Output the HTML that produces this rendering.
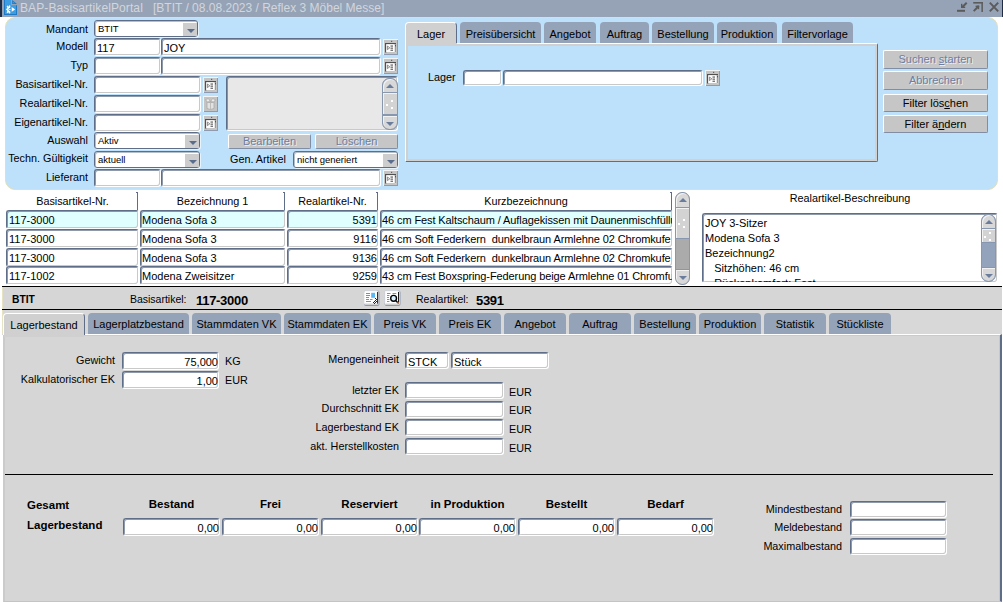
<!DOCTYPE html><html><head><meta charset="utf-8"><style>
*{margin:0;padding:0;box-sizing:border-box}
html,body{width:1003px;height:602px;overflow:hidden;background:#fff;font-family:"Liberation Sans",sans-serif;font-size:11px;color:#000}
.t{position:absolute;white-space:nowrap;line-height:13px;font-size:10.8px}
.in{position:absolute;border-top:1px solid #5e6e89;border-left:1px solid #5e6e89;border-right:1px solid #fff;border-bottom:1px solid #fff;border-radius:3px;box-shadow:inset 1px 1px 0 rgba(94,110,137,0.7), inset -1px -1px 0 #c9c9c9;overflow:hidden}
.cb{position:absolute;background:#fff;border:1px solid #5e6e89;border-radius:3px;box-shadow:inset 1px 1px 0 rgba(94,110,137,0.45), 1px 1px 0 rgba(255,255,255,0.6)}
.dd{position:absolute;right:0;top:2px;width:14px;background:#cdcdcd}
.tri{position:absolute;left:3.5px;top:5.5px;width:0;height:0;border-left:4px solid transparent;border-right:4px solid transparent;border-top:4px solid #5a6d8c}
.tru{position:absolute;width:0;height:0;border-left:4px solid transparent;border-right:4px solid transparent;border-bottom:4px solid #6a7d9c}
.trd{position:absolute;width:0;height:0;border-left:4px solid transparent;border-right:4px solid transparent;border-top:4px solid #6a7d9c}
.ib{position:absolute;background:#c3c3c3;border-radius:2px;box-shadow:inset -1px -1px 0 #a9a9a9, inset 1px 1px 0 #d8d8d8}
.bt{position:absolute;background:#c6c6c6;border-top:1px solid #fff;border-left:1px solid #fff;border-right:1px solid #7f8da5;border-bottom:1px solid #7f8da5;border-radius:2px;text-align:center;white-space:nowrap}
.bt.dis{color:#6b7ea3;text-shadow:1px 1px 0 #eeeeee}
.tb{position:absolute;background:#95a3b8;border-radius:4px 4px 0 0;text-align:center;white-space:nowrap}
.tb.act{background:#d0d0d0;border-top:1px solid #fff;border-left:1px solid #fff;border-right:1px solid #5e6e89}
.sb{position:absolute;border:1px solid #8797b0;overflow:hidden}
.sbb{position:absolute;left:0;background:#d8d8d8;box-shadow:inset 1px 1px 0 #f2f2f2}
.dot{position:absolute;width:2px;height:2px;background:#fff}
</style></head><body><div style="position:absolute;left:0px;top:0px;width:1003px;height:17px;background:#96a3b7"></div>
<div style="position:absolute;left:0px;top:0px;width:2px;height:17px;background:#1f2c45"></div>
<div style="position:absolute;left:1002px;top:0px;width:1px;height:17px;background:#1f2c45"></div>
<svg style="position:absolute;left:4px;top:0" width="14" height="16" viewBox="0 0 14 16">
<rect x="0" y="0" width="13" height="15" fill="#1f78c4"/>
<rect x="1" y="0" width="11" height="14" fill="#3d9de2"/>
<rect x="7" y="0" width="1.2" height="5" fill="#96a3b7"/>
<rect x="7" y="4" width="6" height="1.2" fill="#96a3b7"/>
<rect x="8.2" y="0" width="4.8" height="4" fill="#96a3b7"/>
<path d="M8.2 0 L13 4 H8.2 Z" fill="#1f78c4"/>
<path d="M9 1.6 L11 3.3 H9 Z" fill="#3d9de2"/>
<g fill="#fff">

<rect x="4.9" y="5.4" width="1.3" height="1.6"/>
<rect x="4.9" y="11.8" width="1.3" height="1.6"/>
<rect x="2.2" y="8.7" width="1.4" height="1.4"/>
<path d="M2.6 6.2 L3.8 5.6 L4.6 7 L3.4 7.8 Z"/>
<path d="M2.6 12.6 L3.8 13.2 L4.6 11.8 L3.4 11 Z"/>
<path d="M7.7 7.1 L11.2 9.4 L7.7 11.7 Z"/>
</g>
<path d="M6.2 6.9 A2.5 2.5 0 0 0 6.2 11.9" fill="none" stroke="#fff" stroke-width="1.5"/><circle cx="5.9" cy="9.4" r="0.75" fill="#fff"/>
</svg>
<div class="t" style="left:20px;top:2px;font-size:12px;color:#d3d6dc;line-height:12px;letter-spacing:0.1px">BAP-BasisartikelPortal</div>
<div class="t" style="left:153px;top:2px;font-size:12px;color:#d3d6dc;line-height:12px">[BTIT / 08.08.2023 / Reflex 3 Möbel Messe]</div>
<svg style="position:absolute;left:950px;top:0" width="52" height="16" viewBox="950 0 52 16">
<g fill="#5b5b5b">
<rect x="957" y="9.8" width="8" height="2"/>
<path d="M966 2 L967.4 3.4 L962.6 8.2 L961.2 6.8 Z"/>
<rect x="961" y="3.8" width="1.4" height="4.2"/>
<rect x="961" y="6.6" width="4.2" height="1.4"/>
<rect x="973.2" y="2" width="9.7" height="1.6"/>
<rect x="981.4" y="2" width="1.5" height="10"/>
<path d="M973 10.4 L974.4 11.8 L979.2 7 L977.8 5.6 Z"/>
<rect x="975.6" y="5.6" width="3.6" height="1.4"/>
<rect x="977.8" y="5.6" width="1.4" height="3.6"/>
</g>
<g stroke="#5b5b5b" stroke-width="2" fill="none">
<path d="M989.8 2.6 L998.2 11.4 M998.2 2.6 L989.8 11.4"/>
</g></svg>
<div style="position:absolute;left:5px;top:17px;width:993px;height:173px;background:#bde0fb;border:1px solid #e3dfb6;border-radius:10px"></div>
<div class="t" style="right:915px;top:23px;">Mandant</div>
<div class="t" style="right:915px;top:40px;">Modell</div>
<div class="t" style="right:915px;top:59px;">Typ</div>
<div class="t" style="right:915px;top:78px;">Basisartikel-Nr.</div>
<div class="t" style="right:915px;top:97px;">Realartikel-Nr.</div>
<div class="t" style="right:915px;top:116px;">Eigenartikel-Nr.</div>
<div class="t" style="right:915px;top:134px;">Auswahl</div>
<div class="t" style="right:915px;top:152px;">Techn. Gültigkeit</div>
<div class="t" style="right:915px;top:171px;">Lieferant</div>
<div class="cb" style="left:94px;top:20px;width:104px;height:17px"><span style="position:absolute;left:3px;top:1px;font-size:9.5px;line-height:13px">BTIT</span><div class="dd" style="height:13px"><div class="tri"></div></div></div>
<div class="in" style="left:94px;top:38px;width:67px;height:18px;background:#fff;"><span style="position:absolute;left:2px;top:3px;font-size:11px;line-height:13px;white-space:nowrap;">117</span></div>
<div class="in" style="left:161px;top:38px;width:220px;height:18px;background:#fff;"><span style="position:absolute;left:2px;top:3px;font-size:11px;line-height:13px;white-space:nowrap;">JOY</span></div>
<div style="position:absolute;left:383px;top:39px;width:15px;height:16px"><svg width="15" height="16" viewBox="0 0 15 16" style="position:absolute;left:0;top:0">
<rect x="0" y="0" width="15" height="16" fill="#c4c4c4"/>
<rect x="0" y="0" width="15" height="1" fill="#f4f4f4"/><rect x="0" y="0" width="1" height="16" fill="#f4f4f4"/>
<rect x="14" y="1" width="1" height="15" fill="#8d9ab0"/><rect x="1" y="15" width="14" height="1" fill="#8d9ab0"/>
<rect x="8" y="1.8" width="1.2" height="1.2" fill="#666"/>
<rect x="2" y="4" width="11" height="1.3" fill="#505050"/>
<rect x="2" y="4" width="1.3" height="9.5" fill="#505050"/>
<rect x="3.2" y="5.2" width="8.3" height="7.8" fill="#fdfdfd"/>
<rect x="11.8" y="5.2" width="1" height="8" fill="#f4f4f4"/>
<rect x="12" y="5.5" width="1" height="2.2" fill="#555"/><rect x="12" y="8" width="1" height="5" fill="#9a9a9a"/>
<path d="M4.4 7 L6.8 8.8 L4.4 10.6 Z" fill="none" stroke="#707070" stroke-width="0.8"/>
<rect x="7.5" y="6.5" width="2.5" height="1.1" fill="#555"/><rect x="7.5" y="8.6" width="2.5" height="1.1" fill="#555"/><rect x="7.5" y="10.7" width="2.5" height="1.1" fill="#555"/>
</svg></div>
<div class="in" style="left:94px;top:57px;width:67px;height:18px;background:#fff;"></div>
<div class="in" style="left:161px;top:57px;width:220px;height:18px;background:#fff;"></div>
<div style="position:absolute;left:383px;top:58px;width:15px;height:16px"><svg width="15" height="16" viewBox="0 0 15 16" style="position:absolute;left:0;top:0">
<rect x="0" y="0" width="15" height="16" fill="#c4c4c4"/>
<rect x="0" y="0" width="15" height="1" fill="#f4f4f4"/><rect x="0" y="0" width="1" height="16" fill="#f4f4f4"/>
<rect x="14" y="1" width="1" height="15" fill="#8d9ab0"/><rect x="1" y="15" width="14" height="1" fill="#8d9ab0"/>
<rect x="8" y="1.8" width="1.2" height="1.2" fill="#666"/>
<rect x="2" y="4" width="11" height="1.3" fill="#505050"/>
<rect x="2" y="4" width="1.3" height="9.5" fill="#505050"/>
<rect x="3.2" y="5.2" width="8.3" height="7.8" fill="#fdfdfd"/>
<rect x="11.8" y="5.2" width="1" height="8" fill="#f4f4f4"/>
<rect x="12" y="5.5" width="1" height="2.2" fill="#555"/><rect x="12" y="8" width="1" height="5" fill="#9a9a9a"/>
<path d="M4.4 7 L6.8 8.8 L4.4 10.6 Z" fill="none" stroke="#707070" stroke-width="0.8"/>
<rect x="7.5" y="6.5" width="2.5" height="1.1" fill="#555"/><rect x="7.5" y="8.6" width="2.5" height="1.1" fill="#555"/><rect x="7.5" y="10.7" width="2.5" height="1.1" fill="#555"/>
</svg></div>
<div class="in" style="left:94px;top:76px;width:107px;height:18px;background:#fff;"></div>
<div style="position:absolute;left:203px;top:77px;width:15px;height:16px"><svg width="15" height="16" viewBox="0 0 15 16" style="position:absolute;left:0;top:0">
<rect x="0" y="0" width="15" height="16" fill="#c4c4c4"/>
<rect x="0" y="0" width="15" height="1" fill="#f4f4f4"/><rect x="0" y="0" width="1" height="16" fill="#f4f4f4"/>
<rect x="14" y="1" width="1" height="15" fill="#8d9ab0"/><rect x="1" y="15" width="14" height="1" fill="#8d9ab0"/>
<rect x="8" y="1.8" width="1.2" height="1.2" fill="#666"/>
<rect x="2" y="4" width="11" height="1.3" fill="#505050"/>
<rect x="2" y="4" width="1.3" height="9.5" fill="#505050"/>
<rect x="3.2" y="5.2" width="8.3" height="7.8" fill="#fdfdfd"/>
<rect x="11.8" y="5.2" width="1" height="8" fill="#f4f4f4"/>
<rect x="12" y="5.5" width="1" height="2.2" fill="#555"/><rect x="12" y="8" width="1" height="5" fill="#9a9a9a"/>
<path d="M4.4 7 L6.8 8.8 L4.4 10.6 Z" fill="none" stroke="#707070" stroke-width="0.8"/>
<rect x="7.5" y="6.5" width="2.5" height="1.1" fill="#555"/><rect x="7.5" y="8.6" width="2.5" height="1.1" fill="#555"/><rect x="7.5" y="10.7" width="2.5" height="1.1" fill="#555"/>
</svg></div>
<div class="in" style="left:94px;top:95px;width:107px;height:18px;background:#fff;"></div>
<div style="position:absolute;left:203px;top:96px;width:15px;height:16px"><svg width="15" height="16" viewBox="0 0 15 16" style="position:absolute;left:0;top:0">
<rect x="0" y="0" width="15" height="16" fill="#c4c4c4"/>
<rect x="0" y="0" width="15" height="1" fill="#f4f4f4"/><rect x="0" y="0" width="1" height="16" fill="#f4f4f4"/>
<rect x="14" y="1" width="1" height="15" fill="#8d9ab0"/><rect x="1" y="15" width="14" height="1" fill="#8d9ab0"/>
<path d="M4 6 L4 12.5 Q7.5 14.5 11 12.5 L11 6 Q7.5 7.5 4 6 Z" fill="#e2e2e2" stroke="#a9a9a9" stroke-width="0.8"/>
<path d="M4 6 L2.6 3.6 L5.4 2.6 L7.5 5.6 Z" fill="#ececec" stroke="#a9a9a9" stroke-width="0.8"/>
<path d="M11 6 L12.4 3.6 L9.6 2.6 L7.5 5.6 Z" fill="#ececec" stroke="#a9a9a9" stroke-width="0.8"/>
<path d="M7.5 7 V13.5" stroke="#b5b5b5" stroke-width="0.8"/>
</svg></div>
<div class="in" style="left:94px;top:114px;width:107px;height:18px;background:#fff;"></div>
<div style="position:absolute;left:203px;top:115px;width:15px;height:16px"><svg width="15" height="16" viewBox="0 0 15 16" style="position:absolute;left:0;top:0">
<rect x="0" y="0" width="15" height="16" fill="#c4c4c4"/>
<rect x="0" y="0" width="15" height="1" fill="#f4f4f4"/><rect x="0" y="0" width="1" height="16" fill="#f4f4f4"/>
<rect x="14" y="1" width="1" height="15" fill="#8d9ab0"/><rect x="1" y="15" width="14" height="1" fill="#8d9ab0"/>
<rect x="8" y="1.8" width="1.2" height="1.2" fill="#666"/>
<rect x="2" y="4" width="11" height="1.3" fill="#505050"/>
<rect x="2" y="4" width="1.3" height="9.5" fill="#505050"/>
<rect x="3.2" y="5.2" width="8.3" height="7.8" fill="#fdfdfd"/>
<rect x="11.8" y="5.2" width="1" height="8" fill="#f4f4f4"/>
<rect x="12" y="5.5" width="1" height="2.2" fill="#555"/><rect x="12" y="8" width="1" height="5" fill="#9a9a9a"/>
<path d="M4.4 7 L6.8 8.8 L4.4 10.6 Z" fill="none" stroke="#707070" stroke-width="0.8"/>
<rect x="7.5" y="6.5" width="2.5" height="1.1" fill="#555"/><rect x="7.5" y="8.6" width="2.5" height="1.1" fill="#555"/><rect x="7.5" y="10.7" width="2.5" height="1.1" fill="#555"/>
</svg></div>
<div class="cb" style="left:94px;top:132px;width:106px;height:17px"><span style="position:absolute;left:3px;top:1px;font-size:9.5px;line-height:13px">Aktiv</span><div class="dd" style="height:13px"><div class="tri"></div></div></div>
<div class="cb" style="left:94px;top:151px;width:106px;height:17px"><span style="position:absolute;left:3px;top:1px;font-size:9.5px;line-height:13px">aktuell</span><div class="dd" style="height:13px"><div class="tri"></div></div></div>
<div class="in" style="left:94px;top:169px;width:67px;height:18px;background:#fff;"></div>
<div class="in" style="left:161px;top:169px;width:220px;height:18px;background:#fff;"></div>
<div style="position:absolute;left:383px;top:170px;width:15px;height:16px"><svg width="15" height="16" viewBox="0 0 15 16" style="position:absolute;left:0;top:0">
<rect x="0" y="0" width="15" height="16" fill="#c4c4c4"/>
<rect x="0" y="0" width="15" height="1" fill="#f4f4f4"/><rect x="0" y="0" width="1" height="16" fill="#f4f4f4"/>
<rect x="14" y="1" width="1" height="15" fill="#8d9ab0"/><rect x="1" y="15" width="14" height="1" fill="#8d9ab0"/>
<rect x="8" y="1.8" width="1.2" height="1.2" fill="#666"/>
<rect x="2" y="4" width="11" height="1.3" fill="#505050"/>
<rect x="2" y="4" width="1.3" height="9.5" fill="#505050"/>
<rect x="3.2" y="5.2" width="8.3" height="7.8" fill="#fdfdfd"/>
<rect x="11.8" y="5.2" width="1" height="8" fill="#f4f4f4"/>
<rect x="12" y="5.5" width="1" height="2.2" fill="#555"/><rect x="12" y="8" width="1" height="5" fill="#9a9a9a"/>
<path d="M4.4 7 L6.8 8.8 L4.4 10.6 Z" fill="none" stroke="#707070" stroke-width="0.8"/>
<rect x="7.5" y="6.5" width="2.5" height="1.1" fill="#555"/><rect x="7.5" y="8.6" width="2.5" height="1.1" fill="#555"/><rect x="7.5" y="10.7" width="2.5" height="1.1" fill="#555"/>
</svg></div>
<div class="in" style="left:226px;top:76px;width:172px;height:55px;background:#e8e8e8;"></div>
<div class="sb" style="left:382px;top:78px;width:16px;height:52px;border-radius:7px;background:#ababab"><div class="sbb" style="top:0;width:14px;height:14px;border-radius:7px 7px 0 0;border-bottom:1px solid #8797b0"><div class="tru" style="left:3.0px;top:4.5px"></div></div><div class="sbb" style="top:36px;width:14px;height:14px;border-radius:0 0 7px 7px;border-top:1px solid #8797b0"><div class="trd" style="left:3.0px;top:5.5px"></div></div><div class="sbb" style="top:14px;width:14px;height:22px;background:#d3d3d3;border-bottom:1px solid #8797b0"><div class="dot" style="left:8px;top:7px"></div><div class="dot" style="left:3px;top:11px"></div><div class="dot" style="left:8px;top:14px"></div></div></div>
<div class="bt dis" style="left:228px;top:134px;width:83px;height:15px;line-height:13px;font-size:11px">Bearbeiten</div>
<div class="bt dis" style="left:315px;top:134px;width:83px;height:15px;line-height:13px;font-size:11px">Löschen</div>
<div class="t" style="left:230px;top:153px;">Gen. Artikel</div>
<div class="cb" style="left:293px;top:151px;width:105px;height:17px"><span style="position:absolute;left:3px;top:1px;font-size:9.5px;line-height:13px">nicht generiert</span><div class="dd" style="height:13px"><div class="tri"></div></div></div>
<div style="position:absolute;left:405px;top:43px;width:473px;height:119px;background:#bde0fb;border-left:1px solid #fff;border-top:1px solid #fff;border-right:1px solid #5e6e89;border-bottom:1px solid #5e6e89;box-shadow:inset 2px 2px 0 #d0d0d0, inset -2px -2px 0 #d4d0cc;border-radius:0 2px 2px 0"></div>
<div class="tb act" style="left:405px;top:22px;width:52px;height:21px;line-height:21px;padding-top:1px">Lager</div>
<div class="tb" style="left:460px;top:22px;width:81px;height:21px;line-height:21px;padding-top:2px">Preisübersicht</div>
<div class="tb" style="left:544px;top:22px;width:52px;height:21px;line-height:21px;padding-top:2px">Angebot</div>
<div class="tb" style="left:600px;top:22px;width:49px;height:21px;line-height:21px;padding-top:2px">Auftrag</div>
<div class="tb" style="left:652px;top:22px;width:62px;height:21px;line-height:21px;padding-top:2px">Bestellung</div>
<div class="tb" style="left:717px;top:22px;width:60px;height:21px;line-height:21px;padding-top:2px">Produktion</div>
<div class="tb" style="left:782px;top:22px;width:71px;height:21px;line-height:21px;padding-top:2px">Filtervorlage</div>
<div style="position:absolute;left:406px;top:43px;width:51px;height:3px;background:#d0d0d0"></div>
<div class="t" style="left:428px;top:71px;">Lager</div>
<div class="in" style="left:463px;top:70px;width:39px;height:16px;background:#fff;"></div>
<div class="in" style="left:503px;top:70px;width:200px;height:16px;background:#fff;"></div>
<div style="position:absolute;left:705px;top:70px;width:15px;height:16px"><svg width="15" height="16" viewBox="0 0 15 16" style="position:absolute;left:0;top:0">
<rect x="0" y="0" width="15" height="16" fill="#c4c4c4"/>
<rect x="0" y="0" width="15" height="1" fill="#f4f4f4"/><rect x="0" y="0" width="1" height="16" fill="#f4f4f4"/>
<rect x="14" y="1" width="1" height="15" fill="#8d9ab0"/><rect x="1" y="15" width="14" height="1" fill="#8d9ab0"/>
<rect x="8" y="1.8" width="1.2" height="1.2" fill="#666"/>
<rect x="2" y="4" width="11" height="1.3" fill="#505050"/>
<rect x="2" y="4" width="1.3" height="9.5" fill="#505050"/>
<rect x="3.2" y="5.2" width="8.3" height="7.8" fill="#fdfdfd"/>
<rect x="11.8" y="5.2" width="1" height="8" fill="#f4f4f4"/>
<rect x="12" y="5.5" width="1" height="2.2" fill="#555"/><rect x="12" y="8" width="1" height="5" fill="#9a9a9a"/>
<path d="M4.4 7 L6.8 8.8 L4.4 10.6 Z" fill="none" stroke="#707070" stroke-width="0.8"/>
<rect x="7.5" y="6.5" width="2.5" height="1.1" fill="#555"/><rect x="7.5" y="8.6" width="2.5" height="1.1" fill="#555"/><rect x="7.5" y="10.7" width="2.5" height="1.1" fill="#555"/>
</svg></div>
<div class="bt dis" style="left:883px;top:50px;width:105px;height:19px;line-height:17px;font-size:11px">Suchen <u>s</u>tarten</div>
<div class="bt dis" style="left:883px;top:71px;width:105px;height:19px;line-height:17px;font-size:11px">Abbrechen</div>
<div class="bt" style="left:883px;top:94px;width:105px;height:18px;line-height:16px;font-size:11px">Filter lös<u>c</u>hen</div>
<div class="bt" style="left:883px;top:115px;width:105px;height:18px;line-height:16px;font-size:11px">Filter ä<u>n</u>dern</div>
<div class="t" style="left:7px;top:195px;width:131px;text-align:center;">Basisartikel-Nr.</div>
<div class="t" style="left:140px;top:195px;width:145px;text-align:center;">Bezeichnung 1</div>
<div class="t" style="left:287px;top:195px;width:91px;text-align:center;">Realartikel-Nr.</div>
<div class="t" style="left:380px;top:195px;width:292px;text-align:center;">Kurzbezeichnung</div>
<div style="position:absolute;left:137px;top:192px;width:1px;height:18px;background:#5e6e89"></div>
<div style="position:absolute;left:136px;top:192px;width:1px;height:1px;background:#5e6e89"></div>
<div style="position:absolute;left:284px;top:192px;width:1px;height:18px;background:#5e6e89"></div>
<div style="position:absolute;left:283px;top:192px;width:1px;height:1px;background:#5e6e89"></div>
<div style="position:absolute;left:377px;top:192px;width:1px;height:18px;background:#5e6e89"></div>
<div style="position:absolute;left:376px;top:192px;width:1px;height:1px;background:#5e6e89"></div>
<div style="position:absolute;left:671px;top:192px;width:1px;height:18px;background:#5e6e89"></div>
<div style="position:absolute;left:670px;top:192px;width:1px;height:1px;background:#5e6e89"></div>
<div class="in" style="left:6px;top:210px;width:133px;height:19px;background:#e0ffff;"><span style="position:absolute;left:2px;top:3px;font-size:11px;line-height:13px;white-space:nowrap;">117-3000</span></div>
<div class="in" style="left:140px;top:210px;width:146px;height:19px;background:#e0ffff;"><span style="position:absolute;left:1px;top:3px;font-size:11px;line-height:13px;white-space:nowrap;">Modena Sofa 3</span></div>
<div class="in" style="left:287px;top:210px;width:92px;height:19px;background:#e0ffff;"><span style="position:absolute;right:1px;top:3px;font-size:11px;line-height:13px;white-space:nowrap;">5391</span></div>
<div class="in" style="left:380px;top:210px;width:293px;height:19px;background:#e0ffff;"><span style="position:absolute;left:1px;top:3px;font-size:11px;line-height:13px;white-space:nowrap;letter-spacing:-0.1px">46 cm Fest Kaltschaum / Auflagekissen mit Daunenmischfüllung</span></div>
<div class="in" style="left:6px;top:229px;width:133px;height:19px;background:#fff;"><span style="position:absolute;left:2px;top:3px;font-size:11px;line-height:13px;white-space:nowrap;">117-3000</span></div>
<div class="in" style="left:140px;top:229px;width:146px;height:19px;background:#fff;"><span style="position:absolute;left:1px;top:3px;font-size:11px;line-height:13px;white-space:nowrap;">Modena Sofa 3</span></div>
<div class="in" style="left:287px;top:229px;width:92px;height:19px;background:#fff;"><span style="position:absolute;right:1px;top:3px;font-size:11px;line-height:13px;white-space:nowrap;">9116</span></div>
<div class="in" style="left:380px;top:229px;width:293px;height:19px;background:#fff;"><span style="position:absolute;left:1px;top:3px;font-size:11px;line-height:13px;white-space:nowrap;letter-spacing:-0.1px">46 cm Soft Federkern&nbsp; dunkelbraun Armlehne 02 Chromkufe</span></div>
<div class="in" style="left:6px;top:248px;width:133px;height:19px;background:#fff;"><span style="position:absolute;left:2px;top:3px;font-size:11px;line-height:13px;white-space:nowrap;">117-3000</span></div>
<div class="in" style="left:140px;top:248px;width:146px;height:19px;background:#fff;"><span style="position:absolute;left:1px;top:3px;font-size:11px;line-height:13px;white-space:nowrap;">Modena Sofa 3</span></div>
<div class="in" style="left:287px;top:248px;width:92px;height:19px;background:#fff;"><span style="position:absolute;right:1px;top:3px;font-size:11px;line-height:13px;white-space:nowrap;">9136</span></div>
<div class="in" style="left:380px;top:248px;width:293px;height:19px;background:#fff;"><span style="position:absolute;left:1px;top:3px;font-size:11px;line-height:13px;white-space:nowrap;letter-spacing:-0.1px">46 cm Soft Federkern&nbsp; dunkelbraun Armlehne 02 Chromkufe</span></div>
<div class="in" style="left:6px;top:266px;width:133px;height:19px;background:#fff;"><span style="position:absolute;left:2px;top:3px;font-size:11px;line-height:13px;white-space:nowrap;">117-1002</span></div>
<div class="in" style="left:140px;top:266px;width:146px;height:19px;background:#fff;"><span style="position:absolute;left:1px;top:3px;font-size:11px;line-height:13px;white-space:nowrap;">Modena Zweisitzer</span></div>
<div class="in" style="left:287px;top:266px;width:92px;height:19px;background:#fff;"><span style="position:absolute;right:1px;top:3px;font-size:11px;line-height:13px;white-space:nowrap;">9259</span></div>
<div class="in" style="left:380px;top:266px;width:293px;height:19px;background:#fff;"><span style="position:absolute;left:1px;top:3px;font-size:11px;line-height:13px;white-space:nowrap;letter-spacing:-0.1px">43 cm Fest Boxspring-Federung beige Armlehne 01 Chromfuß</span></div>
<div class="sb" style="left:675px;top:192px;width:15px;height:93px;border-radius:7px;background:#ababab"><div class="sbb" style="top:0;width:13px;height:15px;border-radius:7px 7px 0 0;border-bottom:1px solid #8797b0"><div class="tru" style="left:2.5px;top:5.0px"></div></div><div class="sbb" style="top:76px;width:13px;height:15px;border-radius:0 0 7px 7px;border-top:1px solid #8797b0"><div class="trd" style="left:2.5px;top:6.0px"></div></div><div class="sbb" style="top:15px;width:13px;height:31px;background:#d3d3d3;border-bottom:1px solid #8797b0"><div class="dot" style="left:7px;top:11px"></div><div class="dot" style="left:2px;top:15px"></div><div class="dot" style="left:7px;top:18px"></div></div></div>
<div class="t" style="left:702px;top:192px;width:296px;text-align:center;">Realartikel-Beschreibung</div>
<div class="in" style="left:702px;top:213px;width:296px;height:70px;background:#fff">
<div style="position:absolute;left:2px;top:2px;line-height:14.9px;white-space:pre;font-size:11px">JOY 3-Sitzer
Modena Sofa 3
Bezeichnung2
   Sitzhöhen: 46 cm
   Rückenkomfort: Fest</div></div>
<div class="sb" style="left:981px;top:214px;width:15px;height:68px;border-radius:7px;background:#93a3bc"><div class="sbb" style="top:0;width:13px;height:14px;border-radius:7px 7px 0 0;border-bottom:1px solid #8797b0"><div class="tru" style="left:2.5px;top:4.5px"></div></div><div class="sbb" style="top:52px;width:13px;height:14px;border-radius:0 0 7px 7px;border-top:1px solid #8797b0"><div class="trd" style="left:2.5px;top:5.5px"></div></div><div class="sbb" style="top:14px;width:13px;height:14px;background:#d3d3d3;border-bottom:1px solid #8797b0"><div class="dot" style="left:7px;top:3px"></div><div class="dot" style="left:2px;top:7px"></div><div class="dot" style="left:7px;top:10px"></div></div></div>
<div style="position:absolute;left:2px;top:286px;width:1000px;height:1px;background:#000"></div>
<div style="position:absolute;left:2px;top:287px;width:1000px;height:22px;background:#d6d6d6"></div>
<div style="position:absolute;left:2px;top:309px;width:1000px;height:1px;background:#000"></div>
<div style="position:absolute;left:2px;top:310px;width:1000px;height:25px;background:#d8d8d8"></div>
<div style="position:absolute;left:2px;top:287px;width:1px;height:22px;background:#e6e2c4"></div>
<div style="position:absolute;left:2px;top:310px;width:1px;height:24px;background:#e6e2c4"></div>
<div class="t" style="left:12px;top:293px;font-weight:bold;font-size:10.3px">BTIT</div>
<div class="t" style="right:816.5px;top:293px;font-size:10.5px">Basisartikel:</div>
<div class="t" style="left:196px;top:292.5px;font-weight:bold;font-size:13px;line-height:15px;letter-spacing:-0.3px">117-3000</div>
<div class="t" style="left:416px;top:293px;font-size:10.5px">Realartikel:</div>
<div class="t" style="left:476px;top:292.5px;font-weight:bold;font-size:13px;line-height:15px;letter-spacing:-0.3px">5391</div>
<svg style="position:absolute;left:362px;top:289px" width="40" height="20" viewBox="362 289 40 20">
<rect x="364" y="290.5" width="15.5" height="15.5" rx="2" fill="#8a9ab3"/>
<rect x="364" y="290.5" width="14.5" height="14.5" rx="2" fill="#f2f2f2"/>
<rect x="365" y="291.5" width="13.5" height="12.5" fill="#fff"/>
<rect x="365" y="303.5" width="13.5" height="1.5" fill="#cfcfcf"/>
<g fill="#ff6a1a">
<rect x="366" y="293" width="4" height="1"/><rect x="366" y="295" width="4" height="1"/><rect x="366" y="297" width="3" height="1"/>
<rect x="366" y="299" width="3" height="1"/><rect x="370" y="299" width="2.5" height="1"/><rect x="366" y="301" width="5" height="1"/>
</g>
<rect x="371.2" y="292.8" width="3.8" height="5" fill="#5bb8f5"/>
<rect x="377.2" y="291.9" width="1" height="11.7" fill="#000"/>
<g fill="#222"><rect x="373" y="302" width="1" height="1"/><rect x="374" y="301" width="1" height="1"/><rect x="375" y="300" width="1" height="1"/><rect x="376" y="299" width="1" height="1"/>
<rect x="375" y="302" width="1" height="1"/><rect x="376" y="301" width="1" height="1"/><rect x="374" y="303" width="1" height="1"/><rect x="375" y="298" width="1" height="1"/></g>
<rect x="384.6" y="290.5" width="15.9" height="15.5" rx="2" fill="#8a9ab3"/>
<rect x="384.6" y="290.5" width="14.9" height="14.5" rx="2" fill="#f2f2f2"/>
<rect x="385.6" y="291.5" width="13.9" height="12.5" fill="#fff"/>
<rect x="385.6" y="303.5" width="13.9" height="1.5" fill="#cfcfcf"/>
<g fill="#ff6a1a">
<rect x="387" y="293" width="3.5" height="1"/><rect x="392.5" y="293" width="3.8" height="1"/>
<rect x="387" y="295" width="2.4" height="1"/><rect x="387" y="297" width="2" height="1"/><rect x="387" y="299" width="2.4" height="1"/><rect x="387" y="301" width="2.4" height="1"/>
<rect x="397.4" y="302.4" width="1.6" height="1.6"/>
</g>
<circle cx="393.6" cy="298.3" r="2.9" fill="#d6f0ff" stroke="#000" stroke-width="1.4"/>
<path d="M395.6 300.4 L397.6 302.4" stroke="#000" stroke-width="1.4"/>
<rect x="398.1" y="291.9" width="1" height="10.5" fill="#000"/>
</svg>
<div style="position:absolute;left:3px;top:334px;width:999px;height:268px;background:#d6d6d6;border-top:1px solid #fff;border-left:2px solid #cbcbcb;border-right:2px solid #5e6e89;border-bottom:1px solid #c4c4c4;box-shadow:inset -1px 0 0 #c8c8c8, inset 0 1px 0 #cacaca"></div>
<div class="tb act" style="left:3px;top:313px;width:82px;height:22px;line-height:22px;padding-top:0px">Lagerbestand</div>
<div class="tb" style="left:88px;top:313px;width:101px;height:21px;line-height:21px;padding-top:1px">Lagerplatzbestand</div>
<div class="tb" style="left:192px;top:313px;width:89px;height:21px;line-height:21px;padding-top:1px">Stammdaten VK</div>
<div class="tb" style="left:284px;top:313px;width:87px;height:21px;line-height:21px;padding-top:1px">Stammdaten EK</div>
<div class="tb" style="left:374px;top:313px;width:62px;height:21px;line-height:21px;padding-top:1px">Preis VK</div>
<div class="tb" style="left:439px;top:313px;width:62px;height:21px;line-height:21px;padding-top:1px">Preis EK</div>
<div class="tb" style="left:504px;top:313px;width:62px;height:21px;line-height:21px;padding-top:1px">Angebot</div>
<div class="tb" style="left:569px;top:313px;width:62px;height:21px;line-height:21px;padding-top:1px">Auftrag</div>
<div class="tb" style="left:634px;top:313px;width:62px;height:21px;line-height:21px;padding-top:1px">Bestellung</div>
<div class="tb" style="left:699px;top:313px;width:62px;height:21px;line-height:21px;padding-top:1px">Produktion</div>
<div class="tb" style="left:764px;top:313px;width:62px;height:21px;line-height:21px;padding-top:1px">Statistik</div>
<div class="tb" style="left:829px;top:313px;width:62px;height:21px;line-height:21px;padding-top:1px">Stückliste</div>
<div style="position:absolute;left:4px;top:333px;width:80px;height:4px;background:#d0d0d0"></div>
<div class="t" style="right:888px;top:354px;">Gewicht</div>
<div class="in" style="left:122px;top:352px;width:97px;height:18px;background:#fff;"><span style="position:absolute;right:0px;top:3px;font-size:11px;line-height:13px;white-space:nowrap;">75,000</span></div>
<div class="t" style="left:225px;top:355px;">KG</div>
<div class="t" style="right:888px;top:373px;">Kalkulatorischer EK</div>
<div class="in" style="left:122px;top:371px;width:97px;height:18px;background:#fff;"><span style="position:absolute;right:0px;top:3px;font-size:11px;line-height:13px;white-space:nowrap;">1,00</span></div>
<div class="t" style="left:225px;top:374px;">EUR</div>
<div class="t" style="right:604px;top:353px;">Mengeneinheit</div>
<div class="in" style="left:405px;top:352px;width:44px;height:17px;background:#fff;"><span style="position:absolute;left:2px;top:3px;font-size:11px;line-height:13px;white-space:nowrap;">STCK</span></div>
<div class="in" style="left:451px;top:352px;width:98px;height:17px;background:#fff;"><span style="position:absolute;left:2px;top:3px;font-size:11px;line-height:13px;white-space:nowrap;">Stück</span></div>
<div class="t" style="right:604px;top:384px;">letzter EK</div>
<div class="in" style="left:405px;top:382px;width:99px;height:17px;background:#fff;"></div>
<div class="t" style="left:509px;top:386px;">EUR</div>
<div class="t" style="right:604px;top:402px;">Durchschnitt EK</div>
<div class="in" style="left:405px;top:401px;width:99px;height:17px;background:#fff;"></div>
<div class="t" style="left:509px;top:404px;">EUR</div>
<div class="t" style="right:604px;top:421px;">Lagerbestand EK</div>
<div class="in" style="left:405px;top:419px;width:99px;height:17px;background:#fff;"></div>
<div class="t" style="left:509px;top:423px;">EUR</div>
<div class="t" style="right:604px;top:440px;">akt. Herstellkosten</div>
<div class="in" style="left:405px;top:438px;width:99px;height:17px;background:#fff;"></div>
<div class="t" style="left:509px;top:442px;">EUR</div>
<div style="position:absolute;left:5px;top:474px;width:988px;height:1px;background:#000"></div>
<div class="t" style="left:27px;top:499px;font-weight:bold;font-size:11.5px">Gesamt</div>
<div class="t" style="left:27px;top:519px;font-weight:bold;font-size:11.5px">Lagerbestand</div>
<div class="t" style="left:123px;top:498px;width:97px;text-align:center;font-weight:bold;font-size:11.5px">Bestand</div>
<div class="in" style="left:123px;top:518px;width:97px;height:18px;background:#fff;"><span style="position:absolute;right:0px;top:3px;font-size:11px;line-height:13px;white-space:nowrap;">0,00</span></div>
<div class="t" style="left:222px;top:498px;width:97px;text-align:center;font-weight:bold;font-size:11.5px">Frei</div>
<div class="in" style="left:222px;top:518px;width:97px;height:18px;background:#fff;"><span style="position:absolute;right:0px;top:3px;font-size:11px;line-height:13px;white-space:nowrap;">0,00</span></div>
<div class="t" style="left:321px;top:498px;width:97px;text-align:center;font-weight:bold;font-size:11.5px">Reserviert</div>
<div class="in" style="left:321px;top:518px;width:97px;height:18px;background:#fff;"><span style="position:absolute;right:0px;top:3px;font-size:11px;line-height:13px;white-space:nowrap;">0,00</span></div>
<div class="t" style="left:419px;top:498px;width:97px;text-align:center;font-weight:bold;font-size:11.5px">in Produktion</div>
<div class="in" style="left:419px;top:518px;width:97px;height:18px;background:#fff;"><span style="position:absolute;right:0px;top:3px;font-size:11px;line-height:13px;white-space:nowrap;">0,00</span></div>
<div class="t" style="left:518px;top:498px;width:97px;text-align:center;font-weight:bold;font-size:11.5px">Bestellt</div>
<div class="in" style="left:518px;top:518px;width:97px;height:18px;background:#fff;"><span style="position:absolute;right:0px;top:3px;font-size:11px;line-height:13px;white-space:nowrap;">0,00</span></div>
<div class="t" style="left:617px;top:498px;width:97px;text-align:center;font-weight:bold;font-size:11.5px">Bedarf</div>
<div class="in" style="left:617px;top:518px;width:97px;height:18px;background:#fff;"><span style="position:absolute;right:0px;top:3px;font-size:11px;line-height:13px;white-space:nowrap;">0,00</span></div>
<div class="t" style="right:161px;top:503px;">Mindestbestand</div>
<div class="in" style="left:850px;top:501px;width:97px;height:17px;background:#fff;"></div>
<div class="t" style="right:161px;top:521px;">Meldebestand</div>
<div class="in" style="left:850px;top:519px;width:97px;height:17px;background:#fff;"></div>
<div class="t" style="right:161px;top:540px;">Maximalbestand</div>
<div class="in" style="left:850px;top:538px;width:97px;height:17px;background:#fff;"></div></body></html>
